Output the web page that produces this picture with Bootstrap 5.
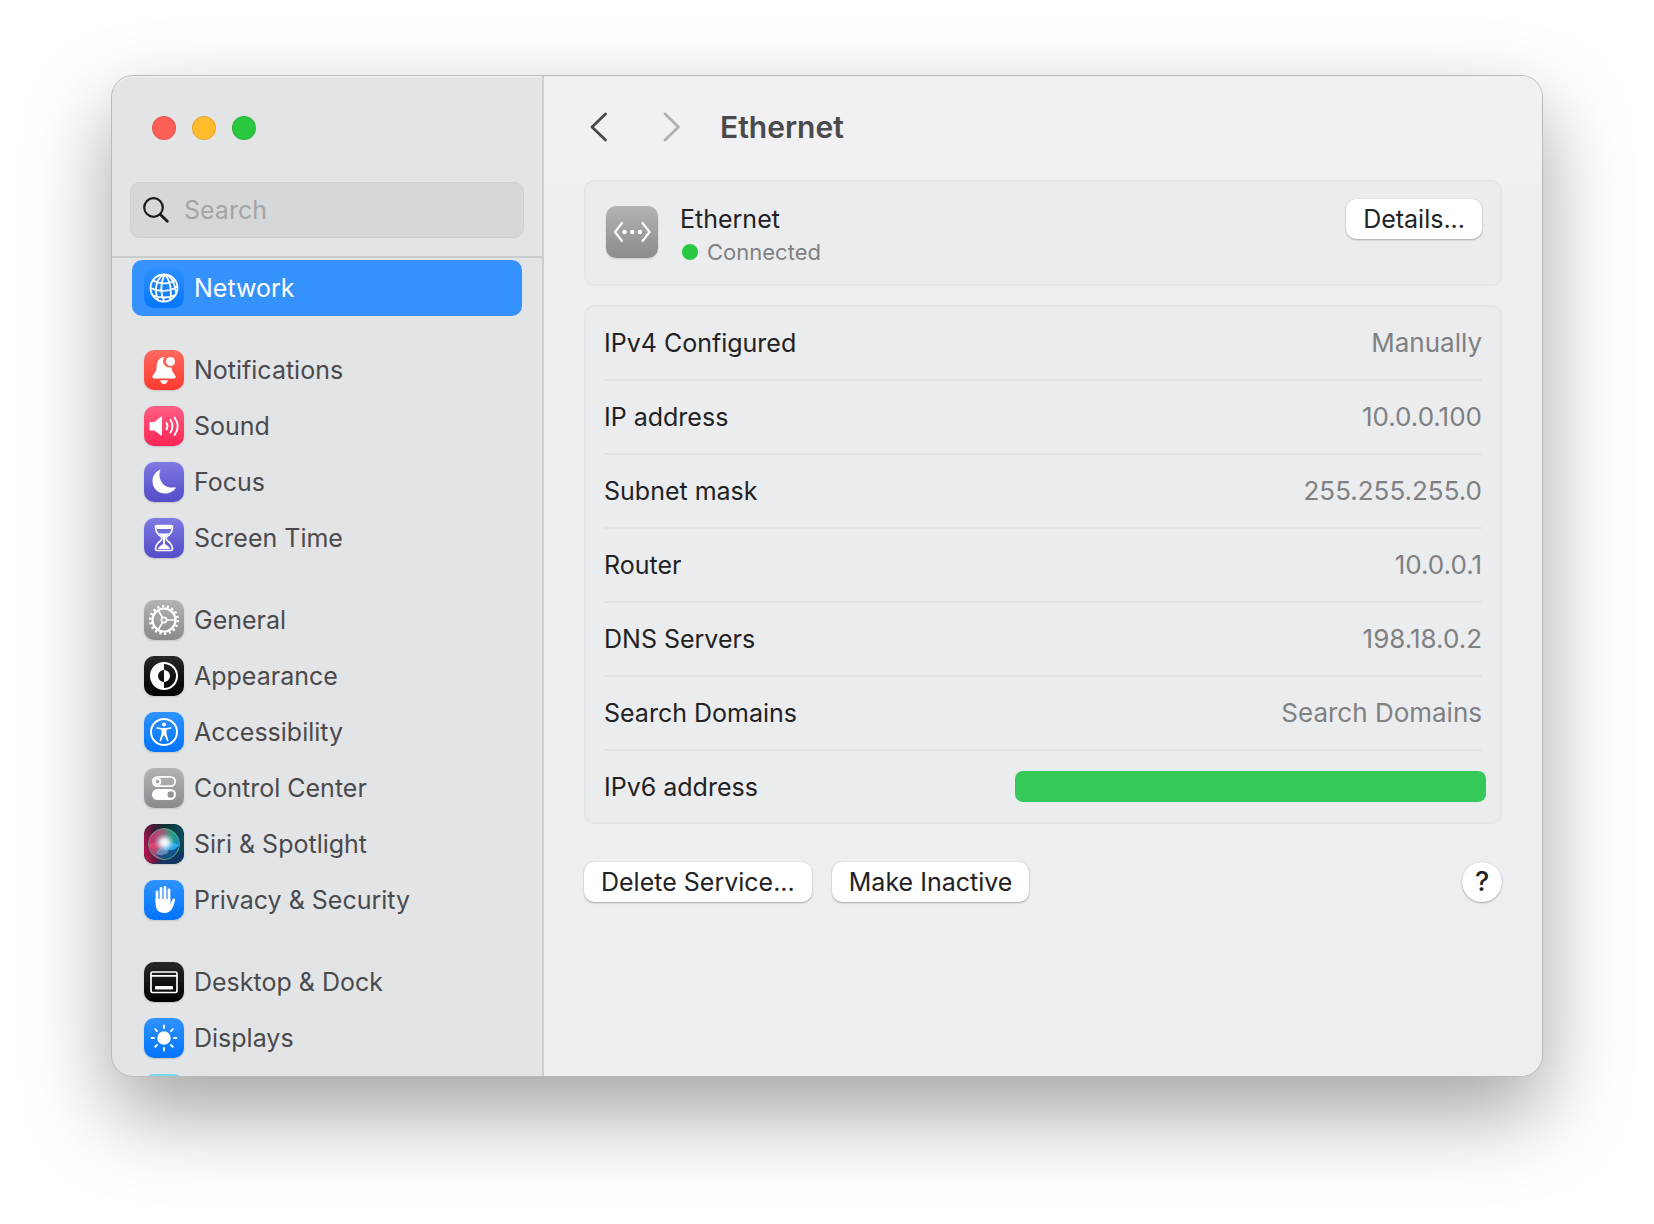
<!DOCTYPE html>
<html lang="en">
<head>
<meta charset="utf-8">
<meta name="viewport" content="width=device-width, initial-scale=1">
<title>Ethernet</title>
<link href="https://cdn.jsdelivr.net/npm/bootstrap@5.3.0/dist/css/bootstrap.min.css" rel="stylesheet">
<style>
  body { font-family: Inter, "Liberation Sans", sans-serif; font-size: 25px; line-height: 32px; color: #222224; background: #fff; padding: 75px 111px 147px; }
  .app-window { height: calc(100vh - 222px); min-height: 640px; border: 1px solid #b9babc; border-radius: 22px; background: #e3e4e6; box-shadow: 0 36px 84px rgba(0,0,0,.36), inset 0 1px 0 rgba(255,255,255,.7); }
  .side-pane { width: 432px; border-right: 2px solid #cdced0; }
  .lights { padding: 40px 40px 0; gap: 16px; }
  .light { width: 24px; height: 24px; border: 1px solid rgba(0,0,0,.1); border-radius: 50%; padding: 0; }
  .light-red { background: #fe5f57; } .light-yellow { background: #febc2e; } .light-green { background: #2ac840; }
  .search-box { flex: none; height: 56px; margin: 42px 18px 18px; padding: 0 12px; gap: 15px; background: #d6d7d9; border: 1px solid #cdced0; border-radius: 10px; }
  .search-box input { font-size: 25px; color: #3b3b3d; outline: 0; }
  .search-box input::placeholder { color: #a3a4a6; opacity: 1; }
  .side-list { border-top: 2px solid #cacbcd; padding: 2px 20px 0; scrollbar-width: none; min-height: 0; }
  .side-list::-webkit-scrollbar { display: none; }
  .side-group { margin-bottom: 26px; }
  .side-link { height: 56px; padding: 0 12px; gap: 10px; border-radius: 10px; color: #4a4a4d; }
  .side-link.active { background: #3592fd; color: #fff; }
  .tile { width: 40px; height: 40px; flex: none; border-radius: 10px; box-shadow: 0 1px 2px rgba(0,0,0,.15); }
  .tile-blue { background: linear-gradient(#2f93ff, #0273fb); }
  .active .tile { background: linear-gradient(#2d8fff, #0477fb); box-shadow: none; }
  .tile-red { background: linear-gradient(#ff6b60, #fb392f); }
  .tile-pink { background: linear-gradient(#ff5f84, #fc2555); }
  .tile-violet { background: linear-gradient(#7f79e3, #534dc9); }
  .tile-gray { background: linear-gradient(#b3b2b7, #8b8a8f); }
  .tile-black { background: linear-gradient(#282828, #000); }
  .tile-cyan { background: #7fd8ee; }
  .main-pane { background: linear-gradient(#f1f1f3 0 108px, #edeef0 108px); padding: 0 40px; }
  .pane-head { height: 104px; padding-bottom: 2px; }
  .nav-btn { border: 0; background: none; padding: 0; width: 30px; height: 30px; }
  .head-title { font-size: 30px; line-height: 36px; font-weight: 600; color: #4a4a4d; margin: 0 0 0 28px; }
  .panel { background: #ebecee; border: 2px solid #e4e5e7; border-radius: 10px; padding: 0 18px; }
  .service { min-height: 106px; padding: 17px 18px 0; gap: 22px; margin-bottom: 19px; }
  .service .big-tile { width: 52px; height: 52px; margin-top: 7px; margin-left: 2px; border-radius: 10px; }
  .service-text { padding-top: 4px; }
  .service-state { font-size: 22px; line-height: 34px; color: #7f8082; gap: 9px; margin-left: 2px; }
  .state-dot { width: 16px; height: 16px; border-radius: 50%; background: #2ac840; }
  .info-row { min-height: 74px; border-bottom: 2px solid #e2e3e5; }
  .info-row:last-child { min-height: 71px; border: 0; }
  .info-row dt { font-weight: 400; }
  .info-row dd { margin: 0; color: #7f8082; font-size: 26px; }
  .redacted { width: 471px; height: 31px; border-radius: 8px; background: #36c95a; }
  .info-row dd.redacted { margin-right: -4px; }
  .pane-foot { margin-top: 38px; gap: 20px; }
  .push { height: 40px; border: 0; border-radius: 10px; background: #fff; color: #222224; padding: 0 17px; line-height: 38px; box-shadow: 0 1px 2px rgba(0,0,0,.28), 0 0 1px rgba(0,0,0,.2); }
  .help { width: 40px; padding: 0; border-radius: 50%; font-weight: 500; line-height: 40px; font-size: 27px; }
</style>
<script src="https://cdn.jsdelivr.net/npm/bootstrap@5.3.0/dist/js/bootstrap.bundle.min.js"></script>
</head>
<body>
<div class="app-window d-flex overflow-hidden">
  <aside class="side-pane d-flex flex-column flex-shrink-0">
    <div class="lights d-flex">
      <button class="light light-red" aria-label="Close"></button>
      <button class="light light-yellow" aria-label="Minimize"></button>
      <button class="light light-green" aria-label="Zoom"></button>
    </div>
    <label class="search-box d-flex align-items-center">
      <svg class="flex-shrink-0" width="26" height="26" viewBox="0 0 26 26" fill="none" stroke="#1b1b1d" stroke-linecap="round"><circle cx="10.500" cy="10.500" r="9.300" stroke-width="2.200"/><path d="M17.400 17.400L24.300 24.300" stroke-width="2.800"/></svg>
      <input type="search" class="border-0 bg-transparent p-0 flex-grow-1 w-100" placeholder="Search" aria-label="Search">
    </label>
    <nav class="side-list overflow-auto flex-grow-1">
      <div class="side-group">
        <a href="#" class="side-link active d-flex align-items-center text-decoration-none" aria-current="page">
          <svg class="tile" viewBox="0 0 40 40" fill="none" stroke="#fff" stroke-width="1.800"><circle cx="20" cy="20" r="13.500"/><path d="M21 6.500C13 9 9.500 20 14 32M21 6.500C17 13 15.500 25 20.500 33.500M21 6.500C26 12 28.500 24 25.500 32.500M22 6.500C28 9 32 17 32 26M9 12.500C15 16 26 16.500 31 12.500M6.700 20C14 24 26 24 33.400 18.500M9 27.500C15 30 25 30.500 31 27"/></svg>
          Network</a>
      </div>
      <div class="side-group">
        <a href="#" class="side-link d-flex align-items-center text-decoration-none">
          <svg class="tile tile-red" viewBox="0 0 40 40" fill="#fff"><path d="M20.500 7C14.500 7.500 12.800 12 12.600 17C12.400 22 10 23.500 8.500 26C8 27.300 8.500 28.500 10 28.500H30C31.500 28.500 32.200 27.300 31.500 26C30 23.500 28 22 27.500 17.200A6.400 6.400 0 0 1 20.500 7.200Z"/><circle cx="26.500" cy="11.500" r="4.500"/><path d="M16 30.300H24C23.500 32.500 22 34 20 34S16.500 32.500 16 30.300Z"/></svg>
          Notifications</a>
        <a href="#" class="side-link d-flex align-items-center text-decoration-none">
          <svg class="tile tile-pink" viewBox="0 0 40 40" fill="none" stroke="#fff" stroke-width="1.800" stroke-linecap="round"><path d="M6.500 16H10.500L17 10.500Q18 10 18 11.500V28.500Q18 30 17 29.500L10.500 24.500H6.500Q5.500 24.500 5.500 23.500V17Q5.500 16 6.500 16Z" fill="#fff" stroke="none"/><path d="M22.500 17Q24.500 20 22.500 23.500M26.500 14Q30.500 20 26.500 26.500M30.500 11.500Q37 20 30.500 29"/></svg>
          Sound</a>
        <a href="#" class="side-link d-flex align-items-center text-decoration-none">
          <svg class="tile tile-violet" viewBox="0 0 40 40" fill="#fff"><path d="M16.300 8.300C13 17 20 27.500 30.500 25.300C31.600 25 31.900 25.700 31.300 26.700C25 35 8.500 32.500 8.500 19C8.500 14 11.500 10 15.500 8C16.100 7.700 16.500 7.800 16.300 8.300Z"/></svg>
          Focus</a>
        <a href="#" class="side-link d-flex align-items-center text-decoration-none">
          <svg class="tile tile-violet" viewBox="0 0 40 40" fill="none" stroke="#fff" stroke-width="1.700"><path d="M13 7.500H27C29.500 7.500 28.500 13 26 16C23.500 18.500 22 19 22 20.500C22 22 23.500 22.500 26 25C28.500 28 29.500 32.500 27 32.500H13C10.500 32.500 11.500 28 14 25C16.500 22.500 18 22 18 20.500C18 19 16.500 18.500 14 16C11.500 13 10.500 7.500 13 7.500Z"/><path d="M13 8H27V11H13ZM14.500 15Q20 16 25.500 15L20.500 20H19.500ZM14 31Q14 28.500 20 25.500Q26 28.500 26 31Z" fill="#fff" stroke="none"/><path d="M12 8.500H28M20 19V26" stroke-width="2"/></svg>
          Screen Time</a>
      </div>
      <div class="side-group">
        <a href="#" class="side-link d-flex align-items-center text-decoration-none">
          <svg class="tile tile-gray" viewBox="0 0 40 40" fill="none" stroke="#fff"><circle cx="20" cy="20" r="11.500" stroke-width="2.200"/><circle cx="20" cy="20" r="13.700" stroke-width="2.600" stroke-dasharray="2.200 2.582"/><circle cx="20" cy="20" r="2.600" stroke-width="1.600"/><path d="M22.700 20H31M18.500 17.700L14.300 10.300M18.500 22.300L14.300 29.700" stroke-width="1.700"/></svg>
          General</a>
        <a href="#" class="side-link d-flex align-items-center text-decoration-none">
          <svg class="tile tile-black" viewBox="0 0 40 40"><circle cx="20" cy="20" r="13" fill="none" stroke="#fff" stroke-width="2"/><path d="M20 7A13 13 0 0 0 20 33V26A6 6 0 0 1 20 14ZM20 14A6 6 0 0 1 20 26Z" fill="#fff"/></svg>
          Appearance</a>
        <a href="#" class="side-link d-flex align-items-center text-decoration-none">
          <svg class="tile tile-blue" viewBox="0 0 40 40" fill="#fff"><circle cx="20" cy="20" r="13" fill="none" stroke="#fff" stroke-width="2"/><circle cx="20" cy="12.600" r="2"/><path d="M13 15.200L18 16H22L27 15.200Q28.500 15.500 27.500 16.500L22.500 17.700V22L24.500 28.500Q24.200 30 23.100 29L20.500 23.500H19.500L16.900 29Q15.800 30 15.500 28.500L17.500 22V17.700L12.500 16.500Q11.500 15.500 13 15.200Z"/></svg>
          Accessibility</a>
        <a href="#" class="side-link d-flex align-items-center text-decoration-none">
          <svg class="tile tile-gray" viewBox="0 0 40 40"><rect x="8.800" y="8.800" width="22.400" height="9.400" rx="4.700" fill="#aaa9ae" stroke="#fff" stroke-width="1.700"/><circle cx="13.500" cy="13.500" r="2.900" fill="#aaa9ae" stroke="#fff" stroke-width="1.900"/><rect x="8" y="21" width="24" height="11" rx="5.500" fill="#fff"/><circle cx="26.700" cy="26.500" r="3.200" fill="#949398"/></svg>
          Control Center</a>
        <a href="#" class="side-link d-flex align-items-center text-decoration-none">
          <svg class="tile tile-black" viewBox="0 0 40 40">
            <defs>
              <linearGradient id="siri-back" x1="0" y1=".6" x2="1" y2=".4"><stop offset="0" stop-color="#b01550"/><stop offset=".3" stop-color="#4a1838"/><stop offset=".6" stop-color="#10302f"/><stop offset="1" stop-color="#0a4a60"/></linearGradient>
              <linearGradient id="siri-orb" x1="0" y1=".4" x2="1" y2=".6"><stop offset="0" stop-color="#cf2a66"/><stop offset=".42" stop-color="#94627c"/><stop offset=".66" stop-color="#2fa07c"/><stop offset="1" stop-color="#1585c8"/></linearGradient>
              <radialGradient id="siri-glow"><stop offset="0" stop-color="#fff"/><stop offset=".4" stop-color="#f6f9ff" stop-opacity=".8"/><stop offset="1" stop-color="#b5d5ff" stop-opacity="0"/></radialGradient>
            </defs>
            <rect width="40" height="40" rx="10" fill="url(#siri-back)"/><path d="M8 40Q20 36 40 28V32Q39 39 31 40Z" fill="#12386e" opacity=".8"/>
            <circle cx="20" cy="20" r="15.500" fill="url(#siri-orb)" stroke="#58bfa4" stroke-opacity=".7" stroke-width="1"/>
            <path d="M21 20Q28 24 35 22Q31 35 20 35Q15 34 12 31Z" fill="#123f80" opacity=".75"/>
            <path d="M5 20Q12 17 21 20Q15 26 6 24Z" fill="#f04b7e" opacity=".6"/>
            <path d="M21 20Q27 16 35 21Q30 29 20 25Z" fill="#35b4f5" opacity=".85"/>
            <path d="M12 30Q14 24 21 22L25 28Q19 33 12 30Z" fill="#9db8e0" opacity=".55"/>
            <ellipse cx="20.500" cy="18.500" rx="10" ry="9" fill="url(#siri-glow)"/></svg>
          Siri &amp; Spotlight</a>
        <a href="#" class="side-link d-flex align-items-center text-decoration-none">
          <svg class="tile tile-blue" viewBox="0 0 40 40" fill="none" stroke="#fff" stroke-linecap="round"><path d="M13 12V22M17 8.500V20M21 7.500V20M25 10V21" stroke-width="2.800"/><path d="M11.600 19H26.400V24L28.500 19.500C29.300 18 31.500 18.500 31 20.300C29.500 26 28 33 20.500 33C14 33 11.600 29.500 11.600 23Z" fill="#fff" stroke="none"/></svg>
          Privacy &amp; Security</a>
      </div>
      <div class="side-group">
        <a href="#" class="side-link d-flex align-items-center text-decoration-none">
          <svg class="tile tile-black" viewBox="0 0 40 40" fill="none" stroke="#fff" stroke-width="1.700"><rect x="7" y="10" width="26" height="20.500" rx="1.500"/><path d="M7 13.800H33"/><rect x="11" y="24" width="18" height="3.500" rx=".8" fill="#fff" stroke="none"/></svg>
          Desktop &amp; Dock</a>
        <a href="#" class="side-link d-flex align-items-center text-decoration-none">
          <svg class="tile tile-blue" viewBox="0 0 40 40" fill="#fff" stroke="#fff" stroke-width="1.900" stroke-linecap="round"><circle cx="20" cy="20" r="5.800"/><path d="M20 7.500V10M20 30V32.500M7.500 20H10M30 20H32.500M11.200 11.200L13 13M27 27L28.800 28.800M11.200 28.800L13 27M27 13L28.800 11.200"/></svg>
          Displays</a>
        <a href="#" class="side-link d-flex align-items-center text-decoration-none" aria-label="Wallpaper">
          <svg class="tile tile-cyan" viewBox="0 0 40 40"><circle cx="20" cy="20" r="10" fill="#fff"/></svg></a>
      </div>
    </nav>
  </aside>
  <main class="main-pane flex-grow-1 overflow-auto">
    <header class="pane-head d-flex align-items-center">
      <button class="nav-btn me-5" aria-label="Back"><svg class="d-block" width="30" height="30" viewBox="0 0 30 30" fill="none" stroke="#4a4a4d" stroke-width="2.800" stroke-linecap="round" stroke-linejoin="round"><path d="M21.500 2L8 15L21.500 28"/></svg></button>
      <button class="nav-btn" aria-label="Forward" disabled><svg class="d-block" width="30" height="30" viewBox="0 0 30 30" fill="none" stroke="#b1b1b3" stroke-width="2.800" stroke-linecap="round" stroke-linejoin="round"><path d="M3 2L16.500 15L3 28"/></svg></button>
      <h1 class="head-title">Ethernet</h1>
    </header>
    <section class="panel service d-flex align-items-start">
      <svg class="tile big-tile tile-gray" viewBox="0 0 52 52" fill="none" stroke="#fff" stroke-width="2.200" stroke-linecap="round" stroke-linejoin="round"><path d="M16 17L9 26L16 35M36.500 17L43.500 26L36.500 35"/><g fill="#fff" stroke="none"><circle cx="18.500" cy="26" r="2.200"/><circle cx="26.200" cy="26" r="2.200"/><circle cx="34" cy="26" r="2.200"/></g></svg>
      <div class="service-text flex-grow-1">
        <div>Ethernet</div>
        <div class="service-state d-flex align-items-center"><span class="state-dot"></span>Connected</div>
      </div>
      <button class="push">Details...</button>
    </section>
    <dl class="panel mb-0">
      <div class="info-row d-flex align-items-center justify-content-between"><dt>IPv4 Configured</dt><dd>Manually</dd></div>
      <div class="info-row d-flex align-items-center justify-content-between"><dt>IP address</dt><dd>10.0.0.100</dd></div>
      <div class="info-row d-flex align-items-center justify-content-between"><dt>Subnet mask</dt><dd>255.255.255.0</dd></div>
      <div class="info-row d-flex align-items-center justify-content-between"><dt>Router</dt><dd>10.0.0.1</dd></div>
      <div class="info-row d-flex align-items-center justify-content-between"><dt>DNS Servers</dt><dd>198.18.0.2</dd></div>
      <div class="info-row d-flex align-items-center justify-content-between"><dt>Search Domains</dt><dd>Search Domains</dd></div>
      <div class="info-row d-flex align-items-center justify-content-between"><dt>IPv6 address</dt><dd class="redacted"></dd></div>
    </dl>
    <footer class="pane-foot d-flex">
      <button class="push">Delete Service...</button>
      <button class="push">Make Inactive</button>
      <button class="push help ms-auto" aria-label="Help">?</button>
    </footer>
  </main>
</div>
</body>
</html>
